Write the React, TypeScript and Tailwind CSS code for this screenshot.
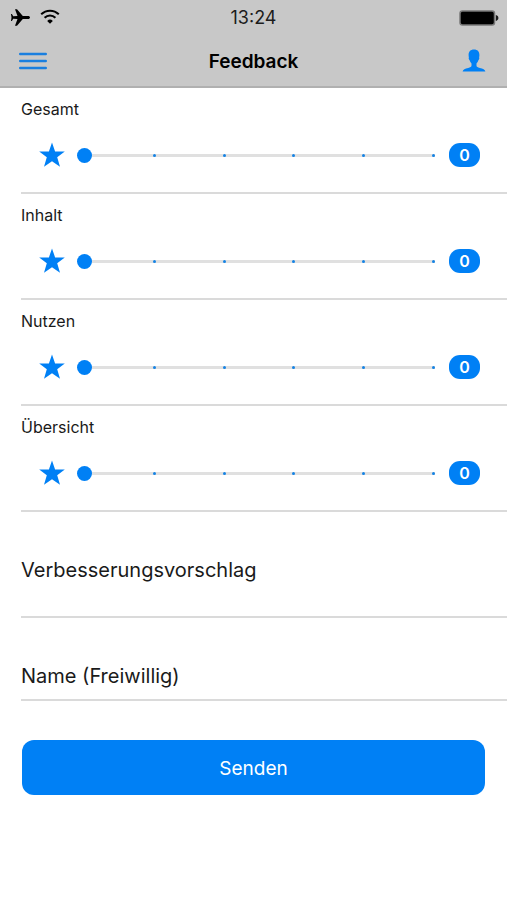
import React, { useState } from 'react';

const CATEGORIES = ['Gesamt', 'Inhalt', 'Nutzen', 'Übersicht'];
const STEPS = [0, 1, 2, 3, 4, 5];

const StatusBar: React.FC = () => (
  <div className="grid h-[35px] grid-cols-3 items-center px-2">
    <div className="flex items-center gap-2">
      <svg className="h-5 w-6" viewBox="0 0 24 20" fill="#000" aria-label="Flugmodus">
        <path d="M22 9.500c0-.9-.8-1.500-1.800-1.500h-5.400L9 1.200H7L9.500 8l-4.300.3L3.900 5.900H3L3.500 9.500 3 13.100h.9l1.300-2.400 4.300.3L7 17.800h2l5.800-6.800h5.400c1 0 1.800-.6 1.800-1.500z" />
      </svg>
      <svg className="h-5 w-5" viewBox="0 0 20 20" fill="none" stroke="#000" strokeWidth="2" aria-label="WLAN">
        <path d="M1.200 6.300a12.400 12.400 0 0 1 17.600 0" />
        <path d="M4.600 9.800a7.600 7.600 0 0 1 10.800 0" />
        <path d="M10 15.800l-2.800-2.900a4 4 0 0 1 5.600 0z" fill="#000" stroke="none" />
      </svg>
    </div>
    <span className="text-center text-lg text-[#1c1c1c]">13:24</span>
    <svg className="h-4 w-10 justify-self-end" viewBox="0 0 40 16" aria-label="Akku">
      <rect x="1" y="1" width="34.500" height="14" rx="2.500" fill="#000" stroke="#777" strokeWidth="1.500" />
      <path d="M36.800 5c1.700.4 2.600 1.600 2.600 3s-.9 2.600-2.600 3z" fill="#1c1c1c" />
    </svg>
  </div>
);

const NavBar: React.FC = () => (
  <div className="grid h-[51px] grid-cols-3 items-center px-[19px]">
    <button type="button" aria-label="Menü" className="justify-self-start">
      <svg className="h-5 w-7" viewBox="0 0 28 20" stroke="#1a7fdf" strokeWidth="2.400" strokeLinecap="round">
        <path d="M1.200 3h25.600M1.200 10h25.600M1.200 17h25.600" />
      </svg>
    </button>
    <h1 className="pt-0.5 text-center text-[19px] leading-7 font-semibold">Feedback</h1>
    <button type="button" aria-label="Profil" className="justify-self-end">
      <svg className="h-6 w-7" viewBox="0 0 28 24" fill="#0080f5">
        <path d="M14 .6c-3.600 0-5.400 2.200-5.400 5.500 0 .9.100 1.700.3 2.500-.5.500-.1 2.200.7 2.600.4 1.400 1 2.400 1.900 3.200v2.400c0 1.200-1.300 1.700-3.300 2.200C5 19.800 3 20.400 2.600 22.600h22.800c-.4-2.200-2.400-2.800-5.600-3.600-2-.5-3.300-1-3.300-2.200v-2.400c.9-.8 1.500-1.800 1.900-3.200.8-.4 1.200-2.100.7-2.600.2-.8.300-1.600.3-2.500C19.400 2.800 17.600.6 14 .6z" />
      </svg>
    </button>
  </div>
);

const RatingRow: React.FC<{ label: string }> = ({ label }) => {
  const [value, setValue] = useState(0);
  const id = `rating-${label.toLowerCase()}`;

  return (
    <div className="h-[106px] border-b-2 border-[#dadada] pt-[9px] pr-[27px]">
      <label htmlFor={id} className="block text-base leading-6">{label}</label>
      <div className="mt-[22px] flex h-6 items-center pl-[18px]">
        <svg className="mr-3 h-[26px] w-[26px] shrink-0" viewBox="0 0 26 26" fill="#0080f5">
          <path d="M13 .4l3.100 9h9.700l-7.600 5.900 2.800 9.500-8-5.600-8 5.600 2.800-9.500L.2 9.400h9.700z" />
        </svg>
        <div className="relative flex h-6 grow items-center">
          {/* track with one tick per step, sits under the native range input */}
          <div className="absolute inset-x-1.5 flex items-center justify-between">
            <span className="absolute inset-x-0 h-[3px] bg-[#e0e0e0]" />
            {STEPS.map((step) => (
              <span key={step} className="relative size-[3px] rounded-full bg-[#1583e4]" />
            ))}
          </div>
          <input
            id={id}
            type="range"
            min={0}
            max={5}
            value={value}
            onChange={(e) => setValue(Number(e.target.value))}
            className="relative h-6 w-full cursor-pointer appearance-none bg-transparent [&::-webkit-slider-thumb]:size-[15px] [&::-webkit-slider-thumb]:appearance-none [&::-webkit-slider-thumb]:rounded-full [&::-webkit-slider-thumb]:bg-[#0080f5]"
          />
        </div>
        <output htmlFor={id} className="ml-2 flex h-6 w-[31px] shrink-0 items-center justify-center rounded-[11px] bg-[#0080f5] text-base font-semibold text-white">
          {value}
        </output>
      </div>
    </div>
  );
};

const App: React.FC = () => {
  const [suggestion, setSuggestion] = useState('');
  const [name, setName] = useState('');

  return (
    <div className="min-h-screen bg-white font-['Inter',sans-serif] text-[#1a1a1a]">
      <header className="border-b-2 border-[#b0b0b0] bg-[#c8c8c8] text-black">
        <StatusBar />
        <NavBar />
      </header>

      <form onSubmit={(e) => e.preventDefault()}>
        <div className="pl-[21px]">
          {CATEGORIES.map((category) => (
            <RatingRow key={category} label={category} />
          ))}

          {/* labels rest on the empty field and float up once it is used */}
          <div className="grid border-b-2 border-[#dadada] pt-11">
            <textarea
              id="suggestion"
              value={suggestion}
              onChange={(e) => setSuggestion(e.target.value)}
              placeholder=" "
              className="peer col-start-1 row-start-1 block h-[60px] w-full resize-none text-xl leading-7 outline-none"
            />
            <label
              htmlFor="suggestion"
              className="pointer-events-none col-start-1 row-start-1 self-start text-xl leading-7 transition-transform peer-focus:-translate-y-7 peer-[:not(:placeholder-shown)]:-translate-y-7"
            >
              Verbesserungsvorschlag
            </label>
          </div>

          <div className="grid border-b-2 border-[#dadada] pt-11">
            <input
              id="name"
              type="text"
              value={name}
              onChange={(e) => setName(e.target.value)}
              placeholder=" "
              className="peer col-start-1 row-start-1 block h-[37px] w-full pb-2 text-xl leading-7 outline-none"
            />
            <label
              htmlFor="name"
              className="pointer-events-none col-start-1 row-start-1 self-start text-xl leading-7 transition-transform peer-focus:-translate-y-7 peer-[:not(:placeholder-shown)]:-translate-y-7"
            >
              Name (Freiwillig)
            </label>
          </div>
        </div>

        <div className="px-[22px] pt-[39px]">
          <button type="submit" className="h-[55px] w-full rounded-xl bg-[#0080f5] pt-0.5 text-[19px] leading-7 text-white">
            Senden
          </button>
        </div>
      </form>
    </div>
  );
};

export default App;
